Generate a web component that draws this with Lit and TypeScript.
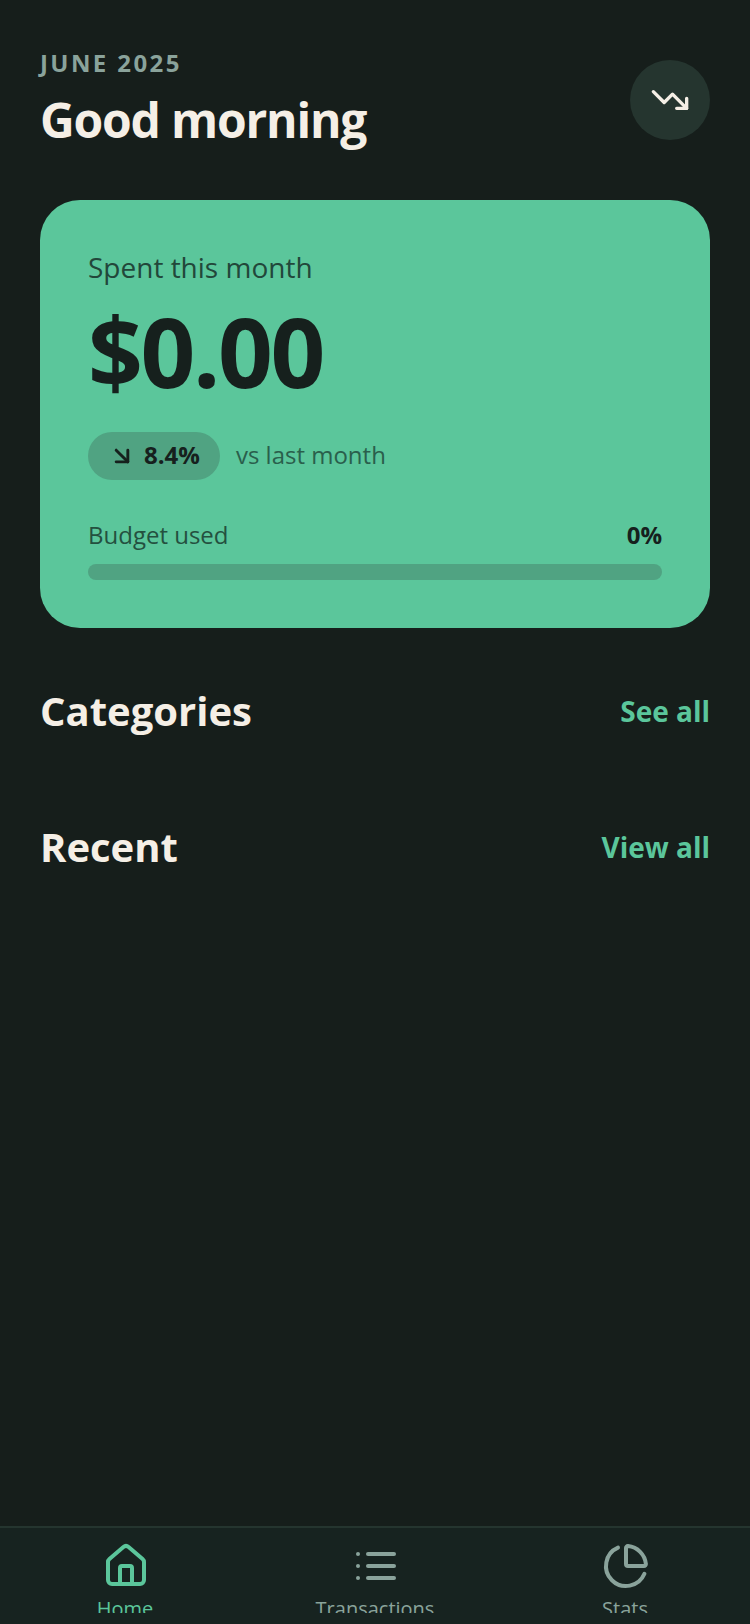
import { LitElement, css, html } from "lit";
import { customElement } from "lit/decorators.js";

@customElement("app-root")
export class AppRoot extends LitElement {
    render() {
        return html`
        <div class="page">
            <main class="main">
                <header class="header">
                    <div>
                        <div class="month">JUNE 2025</div>
                        <h1 class="greeting">Good morning</h1>
                    </div>
                    <div class="trend-btn">
                        <svg width="40" height="40" viewBox="0 0 24 24" fill="none" stroke="#f5efe6" stroke-width="2" stroke-linecap="round" stroke-linejoin="round">
                            <polyline points="22 17 13.5 8.5 8.5 13.5 2 7"/>
                            <polyline points="16 17 22 17 22 11"/>
                        </svg>
                    </div>
                </header>

                <section class="card">
                    <div class="card-label">Spent this month</div>
                    <div class="amount">$0.00</div>
                    <div class="delta-row">
                        <span class="pill">
                            <svg width="28" height="28" viewBox="0 0 24 24" fill="none" stroke="#16201d" stroke-width="2.5" stroke-linecap="round" stroke-linejoin="round">
                                <path d="m7 7 10 10"/>
                                <path d="M17 7v10H7"/>
                            </svg>
                            <span class="raised">8.4%</span>
                        </span>
                        <span class="delta-text raised">vs last month</span>
                    </div>
                    <div class="budget-row">
                        <span class="budget-label">Budget used</span>
                        <span class="budget-value">0%</span>
                    </div>
                    <div class="track"></div>
                </section>

                <div class="section-head first">
                    <h2>Categories</h2>
                    <span class="link">See all</span>
                </div>
                <div class="section-head">
                    <h2>Recent</h2>
                    <span class="link">View all</span>
                </div>
            </main>

            <nav class="nav">
                <div class="nav-item active">
                    <svg width="48" height="48" viewBox="0 0 24 24" fill="none" stroke="currentColor" stroke-width="2" stroke-linecap="round" stroke-linejoin="round">
                        <path d="M15 21v-8a1 1 0 0 0-1-1h-4a1 1 0 0 0-1 1v8"/>
                        <path d="M3 10a2 2 0 0 1 .709-1.528l7-5.999a2 2 0 0 1 2.582 0l7 5.999A2 2 0 0 1 21 10v9a2 2 0 0 1-2 2H5a2 2 0 0 1-2-2z"/>
                    </svg>
                    <span class="nav-label">Home</span>
                </div>
                <div class="nav-item">
                    <svg width="48" height="48" viewBox="0 0 24 24" fill="none" stroke="currentColor" stroke-width="2" stroke-linecap="round" stroke-linejoin="round">
                        <path d="M3 12h.01"/>
                        <path d="M3 18h.01"/>
                        <path d="M3 6h.01"/>
                        <path d="M8 12h13"/>
                        <path d="M8 18h13"/>
                        <path d="M8 6h13"/>
                    </svg>
                    <span class="nav-label">Transactions</span>
                </div>
                <div class="nav-item">
                    <svg width="48" height="48" viewBox="0 0 24 24" fill="none" stroke="currentColor" stroke-width="2" stroke-linecap="round" stroke-linejoin="round">
                        <path d="M21 12c.552 0 1.005-.449.95-.998a10 10 0 0 0-8.953-8.951c-.55-.055-.998.398-.998.95v8a1 1 0 0 0 1 1z"/>
                        <path d="M21.21 15.89A10 10 0 1 1 8 2.83"/>
                    </svg>
                    <span class="nav-label">Stats</span>
                </div>
            </nav>
        </div>`;
    }

    static styles = css`
    :host {
        display: block;
        font-family: "Open Sans", sans-serif;
    }

    .page {
        display: flex;
        flex-direction: column;
        height: 1624px;
        background: #161e1b;
        overflow: hidden;
    }

    .main {
        flex: 1;
        padding: 48px 40px 0;
    }

    .header {
        display: flex;
        justify-content: space-between;
        align-items: center;
    }

    .month {
        color: #8aa39b;
        font-size: 24px;
        line-height: 30px;
        font-weight: 700;
        letter-spacing: 2.4px;
    }

    .greeting {
        margin: 10px 0 0;
        color: #f5efe6;
        font-size: 48px;
        line-height: 64px;
        font-weight: 700;
        letter-spacing: -1.2px;
    }

    .trend-btn {
        display: flex;
        align-items: center;
        justify-content: center;
        width: 80px;
        height: 80px;
        border-radius: 50%;
        background: #25352f;
    }

    .card {
        margin-top: 48px;
        padding: 48px;
        border-radius: 40px;
        background: #5bc69b;
    }

    .card-label {
        color: #22473a;
        font-size: 28px;
        line-height: 38px;
    }

    .amount {
        margin-top: 9px;
        color: #16201d;
        font-size: 96px;
        line-height: 112px;
        font-weight: 700;
        letter-spacing: -2.4px;
    }

    .delta-row {
        display: flex;
        align-items: center;
        gap: 16px;
        margin-top: 25px;
    }

    .pill {
        display: flex;
        align-items: center;
        gap: 8px;
        height: 48px;
        padding: 0 20px;
        border-radius: 24px;
        background: #50a382;
        color: #16201d;
        font-size: 24px;
        font-weight: 700;
    }

    .raised {
        padding-bottom: 3px;
    }

    .delta-text {
        color: #2a5f4c;
        font-size: 24px;
    }

    .budget-row {
        display: flex;
        justify-content: space-between;
        align-items: center;
        margin-top: 39px;
    }

    .budget-label {
        color: #24503f;
        font-size: 24px;
        line-height: 32px;
    }

    .budget-value {
        color: #16201d;
        font-size: 24px;
        line-height: 32px;
        font-weight: 700;
    }

    .track {
        height: 16px;
        margin-top: 13px;
        border-radius: 8px;
        background: #50a382;
    }

    .section-head {
        display: flex;
        justify-content: space-between;
        align-items: center;
        margin-top: 80px;
    }

    .section-head.first {
        margin-top: 55px;
    }

    .section-head h2 {
        margin: 0;
        color: #f5efe6;
        font-size: 40px;
        line-height: 56px;
        font-weight: 700;
    }

    .link {
        color: #5bc69b;
        font-size: 28px;
        font-weight: 700;
    }

    .nav {
        display: flex;
        justify-content: space-between;
        height: 98px;
        box-sizing: border-box;
        padding: 14px 0 0;
        border-top: 2px solid #25352f;
        background: #172320;
    }

    .nav-item {
        flex: 1;
        display: flex;
        flex-direction: column;
        align-items: center;
        height: 71px;
        overflow: hidden;
        color: #8aa39b;
    }

    .nav-item svg {
        flex-shrink: 0;
        margin-left: 2px;
    }

    .nav-item.active {
        color: #5bc69b;
    }

    .nav-label {
        margin-top: 5px;
        font-size: 20px;
        line-height: 28px;
    }
    `;
}

declare global {
    interface HTMLElementTagNameMap {
        "app-root": AppRoot;
    }
}
